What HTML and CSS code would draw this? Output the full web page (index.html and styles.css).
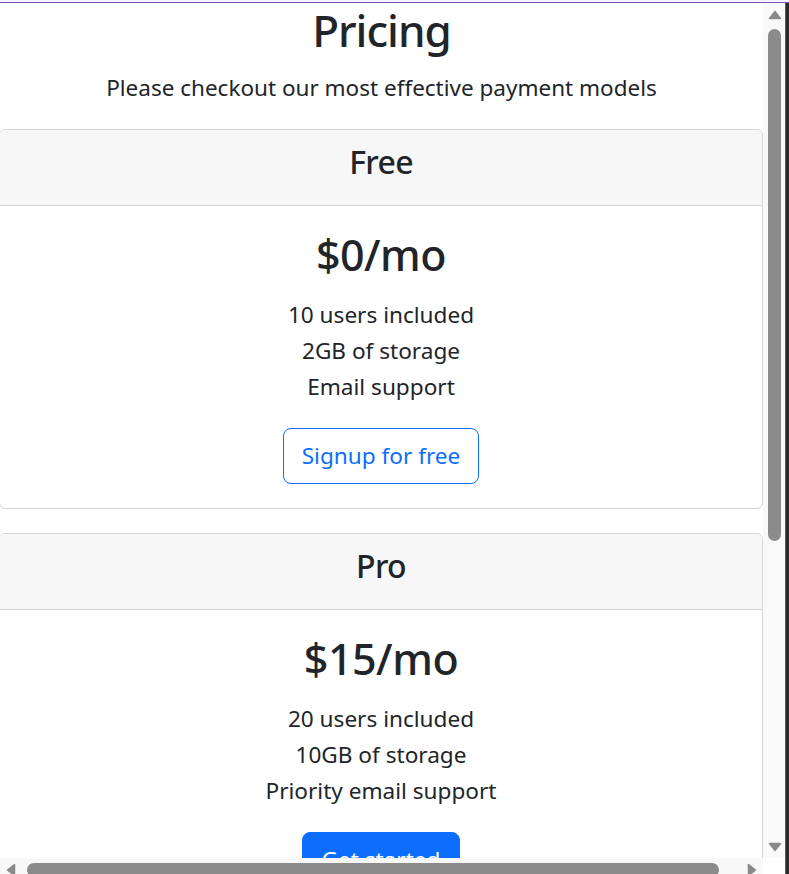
FILE: index.html
```html
<!DOCTYPE html>
<html lang="en">
<head>
<meta charset="utf-8">
<title>Pricing</title>
<link rel="stylesheet" href="styles.css">
</head>
<body>
<div class="frame">
  <div class="topbar"></div>
  <main class="viewport">
    <header class="intro">
      <h1 class="title">Pricing</h1>
      <p class="lead">Please checkout our most effective payment models</p>
    </header>
    <section class="cards">
      <div class="card">
        <div class="card-header"><h4 class="plan">Free</h4></div>
        <div class="card-body">
          <h1 class="price">$0/mo</h1>
          <ul class="features">
            <li>10 users included</li>
            <li>2GB of storage</li>
            <li>Email support</li>
          </ul>
          <button class="btn btn-outline" type="button">Signup for free</button>
        </div>
      </div>
      <div class="card">
        <div class="card-header"><h4 class="plan">Pro</h4></div>
        <div class="card-body">
          <h1 class="price">$15/mo</h1>
          <ul class="features">
            <li>20 users included</li>
            <li>10GB of storage</li>
            <li>Priority email support</li>
          </ul>
          <button class="btn btn-primary" type="button">Get started</button>
        </div>
      </div>
    </section>
  </main>
  <div class="vscroll">
    <svg class="arrow" width="14" height="10" viewBox="0 0 14 10"><path d="M7 1.5 L12.5 8.5 H1.5 Z"/></svg>
    <div class="vthumb"></div>
    <svg class="arrow arrow-end" width="14" height="10" viewBox="0 0 14 10"><path d="M7 8.5 L12.5 1.5 H1.5 Z"/></svg>
  </div>
  <div class="edge"></div>
  <div class="hscroll">
    <svg class="arrow" width="10" height="14" viewBox="0 0 10 14"><path d="M1.5 7 L8.5 1.5 V12.5 Z"/></svg>
    <div class="hthumb"></div>
    <svg class="arrow arrow-end" width="10" height="14" viewBox="0 0 10 14"><path d="M8.5 7 L1.5 1.5 V12.5 Z"/></svg>
  </div>
  <div class="corner"></div>
</div>
</body>
</html>
```
FILE: styles.css
```css
* { box-sizing: border-box; }

html, body {
  margin: 0;
  padding: 0;
  background: #ffffff;
}

body {
  font-family: "Noto Sans", "Open Sans", sans-serif;
  color: #212529;
  overflow: hidden;
}

.frame {
  display: grid;
  grid-template-columns: 763px 22px 4px;
  grid-template-rows: 3px 855px 16px;
  width: 789px;
  height: 874px;
}

.topbar {
  grid-column: 1 / 4;
  grid-row: 1;
  background: linear-gradient(to bottom, #f6f4f9 0 1.6px, #7a55b3 1.6px 3px);
}

.viewport {
  grid-column: 1;
  grid-row: 2;
  overflow: hidden;
  background: #ffffff;
}

.intro {
  text-align: center;
  padding-bottom: 24px;
}

.title {
  margin: 0;
  font-size: 44px;
  line-height: 54px;
  font-weight: 500;
  letter-spacing: -1px;
}

.lead {
  margin: 14px 0 0;
  font-size: 22.5px;
  line-height: 34px;
  font-weight: 400;
}

.cards {
  display: flex;
  flex-direction: column;
  gap: 24px;
}

.card {
  margin-left: -1px;
  width: 764px;
  border: 1px solid #d5d6d7;
  border-radius: 6px;
  text-align: center;
  background: #ffffff;
  overflow: hidden;
}

.card-header {
  background: #f7f7f7;
  border-bottom: 1px solid #d5d6d7;
  padding: 12px 0 24px;
}

.plan {
  margin: 0;
  font-size: 32px;
  line-height: 39px;
  font-weight: 500;
  letter-spacing: -0.7px;
}

.card-body {
  padding: 22px 0 24px;
  display: flex;
  flex-direction: column;
  align-items: center;
}

.price {
  margin: 0;
  font-size: 43px;
  line-height: 53px;
  font-weight: 500;
  letter-spacing: -0.5px;
}

.features {
  list-style: none;
  margin: 16px 0 0;
  padding: 0;
  font-size: 22.6px;
  line-height: 36px;
}

.btn {
  margin-top: 23px;
  font-family: inherit;
  font-size: 22.6px;
  line-height: 34px;
  padding: 10px 18px;
  border-radius: 8px;
  border: 1px solid #0d6efd;
  cursor: pointer;
}

.btn-outline {
  background: #ffffff;
  color: #0d6efd;
}

.btn-primary {
  background: #0d6efd;
  color: #ffffff;
}

.vscroll {
  grid-column: 2;
  grid-row: 2;
  background: #f9f9f9;
  display: flex;
  flex-direction: column;
  align-items: center;
  padding: 7px 0 6px 1px;
}

.arrow path {
  fill: #8a8a8a;
  stroke: #8a8a8a;
  stroke-width: 1.5;
  stroke-linejoin: round;
}

.arrow-end {
  margin-top: auto;
}

.vthumb {
  margin-top: 9px;
  width: 13px;
  height: 512px;
  border-radius: 7px;
  background: #8b8b8b;
}

.edge {
  grid-column: 3;
  grid-row: 2 / 4;
  background: linear-gradient(to right, #5c5c5c 0 1px, #2a2a2a 1px);
}

.hscroll {
  grid-column: 1;
  grid-row: 3;
  background: #f8f8f8;
  display: flex;
  align-items: flex-start;
  padding: 5px 6px 0 6px;
  overflow: hidden;
}

.hscroll .arrow-end {
  margin-top: 0;
  margin-left: auto;
}

.hthumb {
  margin-left: 11px;
  width: 692px;
  height: 14px;
  flex: none;
  border-radius: 7px;
  background: #8b8b8b;
}

.corner {
  grid-column: 2;
  grid-row: 3;
  background: #ffffff;
}
```
